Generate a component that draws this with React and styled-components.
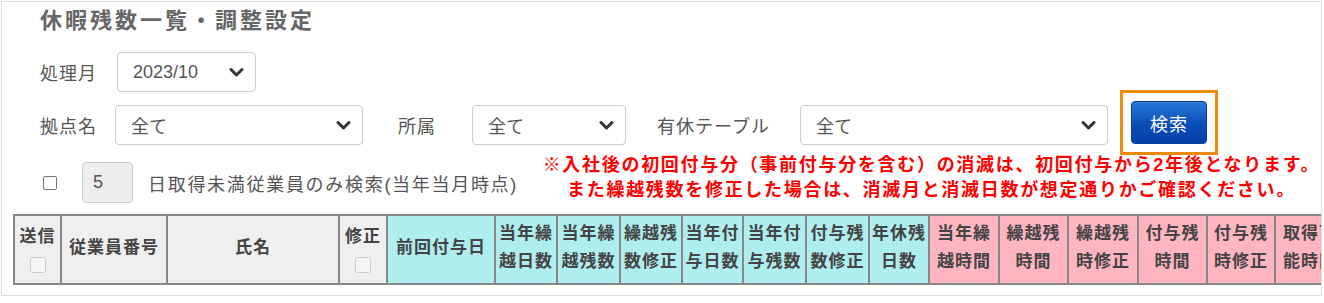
import React from 'react';
import styled, { createGlobalStyle } from 'styled-components';

const Global = createGlobalStyle`
  html, body { margin: 0; padding: 0; background: #fff; }
  body { font-family: "Liberation Sans", "Noto Sans CJK JP", sans-serif; color: #555; }
`;

const Panel = styled.div`
  box-sizing: border-box;
  margin: 1px 0 0 1px;
  width: 1321px;
  height: 295px;
  border: 1px solid #dcdcdc;
  overflow: hidden;
  background: #fff;
`;

const Title = styled.h1`
  margin: 4px 0 0 38px;
  font-size: 22px;
  line-height: 30px;
  font-weight: bold;
  color: #666;
  letter-spacing: 3px;
`;

const Row = styled.div`
  display: flex;
  align-items: center;
  height: 40px;
  margin: ${p => p.$mt}px 0 0 38px;
`;

const Label = styled.span`
  display: inline-block;
  width: ${p => p.$w}px;
  margin-left: ${p => p.$ml || 0}px;
  font-size: 18px;
  letter-spacing: 1px;
  color: #555;
  white-space: nowrap;
`;

const SelectBox = styled.div`
  box-sizing: border-box;
  width: ${p => p.$w}px;
  height: 40px;
  border: 1px solid #ccc;
  border-radius: 4px;
  display: flex;
  align-items: center;
  justify-content: space-between;
  padding: 0 11px 0 15px;
  font-size: 18px;
  color: #555;
  background: #fff;
`;

const Chevron = () => (
  <svg width="15" height="10" viewBox="0 0 15 10">
    <polyline points="2,2.5 7.5,8 13,2.5" fill="none" stroke="#333" strokeWidth="3" strokeLinecap="round" strokeLinejoin="round" />
  </svg>
);

const Select = ({ w, children }) => (
  <SelectBox $w={w}>
    <span>{children}</span>
    <Chevron />
  </SelectBox>
);

const Highlight = styled.div`
  box-sizing: border-box;
  align-self: flex-start;
  margin: -15px 0 -10px 12px;
  width: 98px;
  height: 65px;
  border: 3px solid #ef8a0c;
  display: flex;
  align-items: center;
  justify-content: center;
`;

const Button = styled.button`
  box-sizing: border-box;
  width: 76px;
  height: 43px;
  border: 1px solid #0a3f9c;
  border-radius: 4px;
  background: linear-gradient(#2a7ad8, #0a4db8 55%, #0640a8);
  color: #fff;
  font-family: inherit;
  font-size: 18px;
  letter-spacing: 1px;
`;

const FilterRow = styled.div`
  display: flex;
  align-items: flex-start;
  margin-top: 5px;
`;

const LeftGroup = styled.div`
  display: flex;
  align-items: center;
  margin: 12px 0 0 41px;
`;

const Check = styled.span`
  box-sizing: border-box;
  display: inline-block;
  width: 14px;
  height: 14px;
  border: 1px solid #777;
  border-radius: 2px;
  background: #fff;
`;

const NumInput = styled.div`
  box-sizing: border-box;
  width: 51px;
  height: 41px;
  margin-left: 25px;
  border: 1px solid #ccc;
  border-radius: 4px;
  background: #eee;
  display: flex;
  align-items: center;
  padding-left: 10px;
  font-size: 18px;
  color: #555;
`;

const CheckLabel = styled.span`
  margin-left: 15px;
  font-size: 18px;
  letter-spacing: 1.7px;
  color: #555;
  white-space: nowrap;
`;

const Notice = styled.div`
  flex: 1;
  margin-left: 24px;
  padding-top: 3px;
  text-align: center;
  color: #f00;
  font-weight: bold;
  font-size: 18px;
  line-height: 25px;
  letter-spacing: 1.7px;
  white-space: nowrap;
`;

const TableWrap = styled.div`
  margin: 11px 0 0 11px;
  overflow: hidden;
`;

const Table = styled.table`
  border-collapse: separate;
  border-spacing: 0;
  border: 1px solid #888;
  table-layout: fixed;
  width: 1331px;
`;

const bg = { gray: '#efefef', cyan: '#afeeee', pink: '#ffb6c1' };

const Th = styled.th`
  box-sizing: border-box;
  border: 1px solid #888;
  background: ${p => bg[p.$tone]};
  height: 69px;
  padding: 0 0 3px;
  font-size: 17px;
  line-height: 28px;
  letter-spacing: 1px;
  font-weight: bold;
  color: #444;
  text-align: center;
  vertical-align: middle;
  white-space: nowrap;
  overflow: hidden;
`;

const HeadCheck = styled.span`
  box-sizing: border-box;
  display: block;
  margin: 6px auto 0;
  width: 16px;
  height: 16px;
  border: 1px solid #ccc;
  border-radius: 3px;
  background: #f6f6f6;
`;

const columns = [
  { w: 47, tone: 'gray', label: '送信', check: true },
  { w: 106, tone: 'gray', label: '従業員番号' },
  { w: 172, tone: 'gray', label: '氏名' },
  { w: 48, tone: 'gray', label: '修正', check: true },
  { w: 108, tone: 'cyan', label: '前回付与日' },
  { w: 62, tone: 'cyan', label: ['当年繰', '越日数'] },
  { w: 63, tone: 'cyan', label: ['当年繰', '越残数'] },
  { w: 62, tone: 'cyan', label: ['繰越残', '数修正'] },
  { w: 61, tone: 'cyan', label: ['当年付', '与日数'] },
  { w: 63, tone: 'cyan', label: ['当年付', '与残数'] },
  { w: 63, tone: 'cyan', label: ['付与残', '数修正'] },
  { w: 60, tone: 'cyan', label: ['年休残', '日数'] },
  { w: 70, tone: 'pink', label: ['当年繰', '越時間'] },
  { w: 69, tone: 'pink', label: ['繰越残', '時間'] },
  { w: 70, tone: 'pink', label: ['繰越残', '時修正'] },
  { w: 69, tone: 'pink', label: ['付与残', '時間'] },
  { w: 68, tone: 'pink', label: ['付与残', '時修正'] },
  { w: 70, tone: 'pink', label: ['取得可', '能時間'] },
];

export default function App() {
  return (
    <>
      <Global />
      <Panel>
        <Title>休暇残数一覧・調整設定</Title>
        <Row $mt={16}>
          <Label $w={77}>処理月</Label>
          <Select w={139}>2023/10</Select>
        </Row>
        <Row $mt={13}>
          <Label $w={75}>拠点名</Label>
          <Select w={248}>全て</Select>
          <Label $w={74} $ml={35}>所属</Label>
          <Select w={154}>全て</Select>
          <Label $w={143} $ml={31}>有休テーブル</Label>
          <Select w={308}>全て</Select>
          <Highlight>
            <Button>検索</Button>
          </Highlight>
        </Row>
        <FilterRow>
          <LeftGroup>
            <Check />
            <NumInput>5</NumInput>
            <CheckLabel>日取得未満従業員のみ検索(当年当月時点)</CheckLabel>
          </LeftGroup>
          <Notice>
            ※入社後の初回付与分（事前付与分を含む）の消滅は、初回付与から2年後となります。
            <br />
            また繰越残数を修正した場合は、消滅月と消滅日数が想定通りかご確認ください。
          </Notice>
        </FilterRow>
        <TableWrap>
          <Table>
            <colgroup>
              {columns.map((c, i) => (
                <col key={i} style={{ width: c.w }} />
              ))}
            </colgroup>
            <thead>
              <tr>
                {columns.map((c, i) => (
                  <Th key={i} $tone={c.tone}>
                    {Array.isArray(c.label) ? (
                      <>
                        {c.label[0]}
                        <br />
                        {c.label[1]}
                      </>
                    ) : (
                      c.label
                    )}
                    {c.check && <HeadCheck />}
                  </Th>
                ))}
              </tr>
            </thead>
          </Table>
        </TableWrap>
      </Panel>
    </>
  );
}
